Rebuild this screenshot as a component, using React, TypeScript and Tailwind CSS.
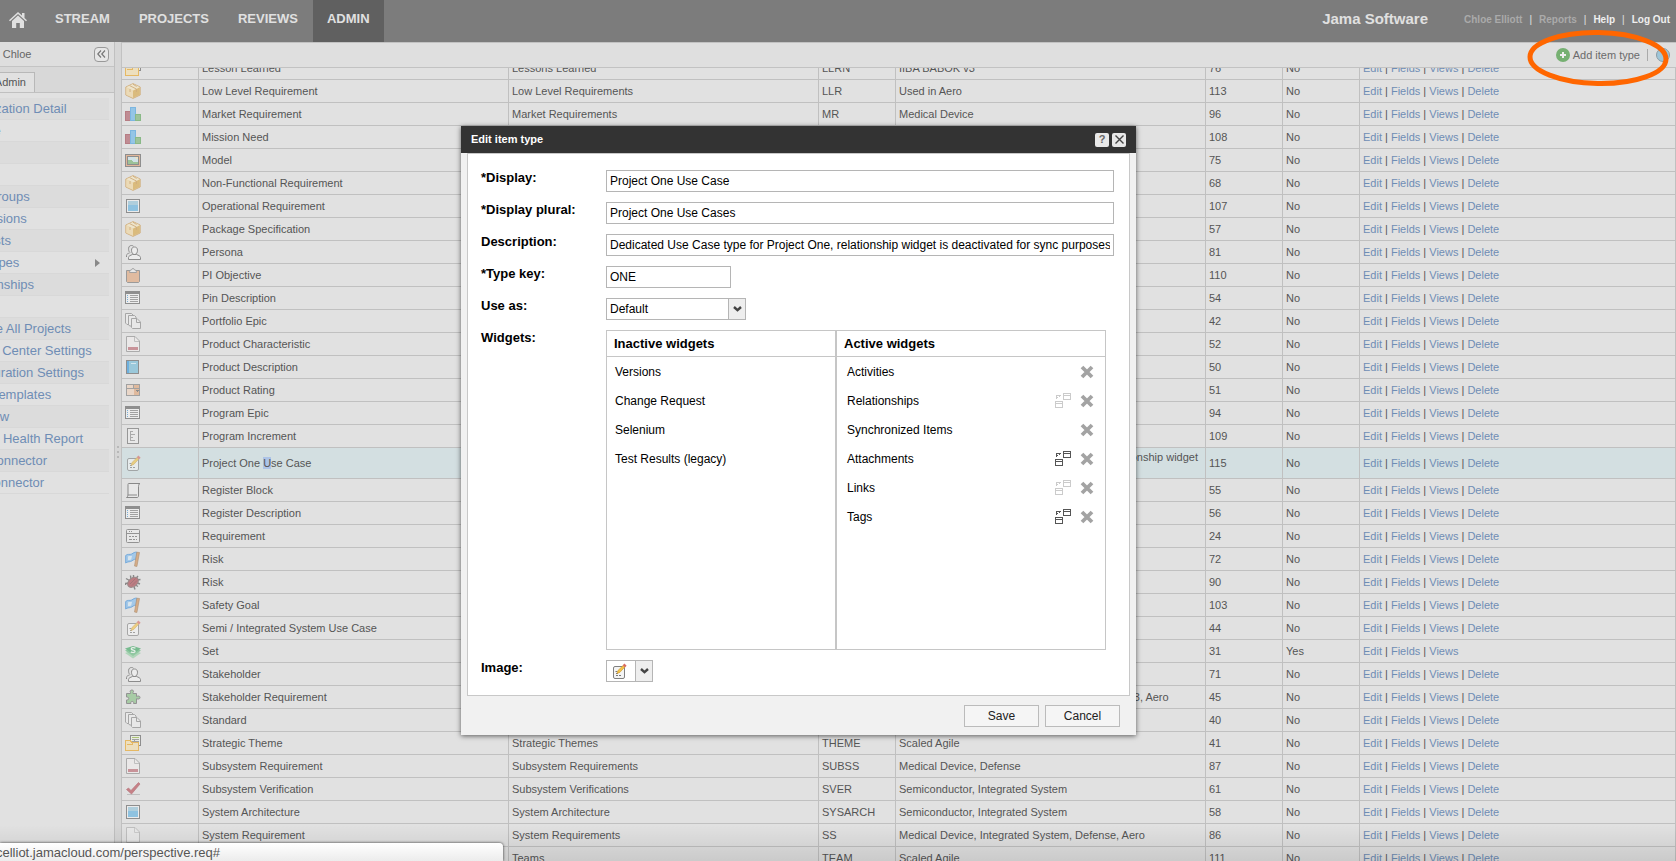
import clsx from "clsx";
import React from "react";

// Types
type IconName =
  | "folder"
  | "box"
  | "bars"
  | "picture"
  | "square"
  | "people"
  | "clipboard"
  | "list"
  | "copies"
  | "docRed"
  | "book"
  | "cabinet"
  | "ruler"
  | "edit"
  | "scroll"
  | "form"
  | "flag"
  | "bug"
  | "stack"
  | "puzzle"
  | "check"
  | "doc";

interface ItemType {
  icon: IconName;
  name: string;
  plural: string;
  typeKey: string;
  description: string;
  id: number;
  system?: boolean;
  selected?: boolean;
}

interface Widget {
  name: string;
  sync?: "on" | "off";
}

// Icons, all on a 16x16 grid
const iconShapes: Record<IconName, React.ReactNode> = {
  folder: (
    <g shapeRendering="crispEdges">
      <rect x="5.5" y="0.5" width="10" height="10" fill="#eef2e6" stroke="#585858" />
      <path d="M7 2.5h7" stroke="#8cb32e" />
      <path d="M7 4.5h7M7 6.5h7M10 8.5h4M9.5 4v6" stroke="#777" />
      <path d="M.5 15.5v-10h5l1 2h7v8z" fill="#f6dfa8" stroke="#e89d12" />
      <path d="M2 9.5h5l1-1" stroke="#e89d12" fill="none" />
    </g>
  ),
  box: (
    <>
      <path d="M8 .6l7.2 3.4v8L8 15.4.8 12V4z" fill="#e8c272" stroke="#c9964c" />
      <path d="M1.3 4.4L8 7.6v7.2l-6.7-3.1z" fill="#f2d79c" />
      <path d="M8 7.6l6.7-3.2v7.3L8 14.8z" fill="#d6a23c" />
      <path d="M1.3 4.2L8 1.1l6.7 3.1L8 7.5z" fill="#f6e6bd" />
      <path d="M4.6 2.6L11.4 6v3M8 1.2l3.6 2.3M5 6v3" stroke="#c48b3d" strokeWidth=".9" fill="none" />
    </>
  ),
  bars: (
    <g shapeRendering="crispEdges">
      <rect x="0.5" y="5.5" width="5" height="9" fill="#ab5560" stroke="#9a3c48" />
      <rect x="5.5" y="1.5" width="5" height="13" fill="#61b4ea" stroke="#3a9be0" />
      <rect x="10.5" y="8.5" width="5" height="6" fill="#72b06e" stroke="#4f9f4c" />
    </g>
  ),
  picture: (
    <g shapeRendering="crispEdges">
      <rect x="0.5" y="2.5" width="15" height="12" fill="#e09a6c" stroke="#585858" />
      <rect x="2.5" y="4.5" width="11" height="8" fill="#c8e4ec" stroke="#585858" />
      <path d="M3 8l3 0 3 2 4 0v2H3z" fill="#6fae6a" />
      <path d="M9 5h4v2h-2z" fill="#f2e5b2" />
    </g>
  ),
  square: (
    <g shapeRendering="crispEdges">
      <rect x="1.5" y="1.5" width="13" height="13" fill="#f2f2f2" stroke="#585858" />
      <rect x="3" y="3" width="10" height="5" fill="#8ec3da" />
      <rect x="3" y="7" width="10" height="6" fill="#58aee0" />
    </g>
  ),
  people: (
    <g fill="none" stroke="#555">
      <path d="M5 8.5C3.600 7.500 3.500 5.600 3.600 4.300 3.800 2.300 5 1.500 6.500 1.500c.8 0 1.500.2 2 .8M1.500 13V11.500c0-1.500 1.500-2 3-2.500" />
      <path
        d="M6.500 6.200C6.500 4 7.800 3 9.500 3s3 1 3 3.200-1 4.300-3 4.300-3-2-3-4.300zM3.500 15.500v-2c0-1.500 2-2.200 4-3h4c2 .8 4 1.500 4 3v2z"
        fill="#f4f4f4"
      />
    </g>
  ),
  clipboard: (
    <>
      <path d="M1.500 3.500h13v11l-1 1h-11l-1-1z" fill="#e0a276" stroke="#6b6b6b" />
      <path d="M4.500 5.500c0-2 1-2.500 2.200-2.800.1-1.600 2.500-1.600 2.600 0 1.200.3 2.200.8 2.200 2.800z" fill="#eee" stroke="#777" />
    </>
  ),
  list: (
    <g shapeRendering="crispEdges">
      <rect x="0.5" y="1.5" width="14" height="12" fill="#f4f4f4" stroke="#585858" />
      <rect x="0" y="1" width="15" height="3" fill="#585858" />
      <path d="M5 5.5h8M5 7.5h8M5 9.5h8M5 11.500h8" stroke="#777" />
      <path d="M2 5.5h1M2 7.5h1M2 9.5h1M2 11.500h1" stroke="#3a8fd0" />
    </g>
  ),
  copies: (
    <g fill="#eee" stroke="#808080">
      <path d="M.5.5h6l1.500 1.500v9.500h-6L.5 10z" />
      <path d="M3.500 2.500h6l1.500 1.500v9h-6l-1.500-1z" />
      <path d="M6.500 5.500h5.500l3.500 3.500v6.500h-8l-1-1z" />
      <path d="M11.500 5.500v4h4" fill="none" />
    </g>
  ),
  docRed: (
    <>
      <path d="M1.500.5h8.500l4.500 4.500v10.500h-13z" fill="#f0eeee" stroke="#888" />
      <path d="M9.500 1v4.500h4.500" fill="none" stroke="#aaa" />
      <rect x="3" y="11" width="10" height="3" fill="#b8606a" />
    </>
  ),
  book: (
    <g shapeRendering="crispEdges">
      <rect x="1.500" y="1.500" width="12" height="13" fill="#6bb8d6" stroke="#585858" />
      <rect x="2" y="2" width="2" height="12" fill="#2291dd" />
      <path d="M6 4.500h5" stroke="#cdeaf5" />
    </g>
  ),
  cabinet: (
    <g shapeRendering="crispEdges">
      <rect x="1.500" y="2.500" width="13" height="11" fill="#efd0b8" stroke="#777" />
      <rect x="9" y="3" width="5" height="10" fill="#dfa070" />
      <path d="M1 6.500h14M8.500 3v4" stroke="#777" />
      <path d="M10 8h4l-2 2z" fill="#555" />
    </g>
  ),
  ruler: (
    <g shapeRendering="crispEdges" fill="none" stroke="#666">
      <rect x="2.500" y="0.500" width="11" height="15" fill="#eee" />
      <path d="M5.500 3v10M5 3.500h3M5 6.500h5M5 9.500h3M5 12.500h5" stroke="#888" />
    </g>
  ),
  edit: (
    <>
      <rect x="2.500" y="3.500" width="11" height="12" rx="1.500" fill="#f4f4f4" stroke="#808080" />
      <path d="M5 10.500h2M5 12.500h6M4.500 8.500h2" stroke="#777" strokeDasharray="2 1" />
      <path d="M6 10.500l1-3L12.200 2.400l1.600 1.600L8.800 9.400z" fill="#f5c343" stroke="#c9962d" strokeWidth=".6" />
      <path d="M11.800 2.200L13.400.6l2.200 2.200L14 4.400z" fill="#d8685e" />
    </>
  ),
  scroll: (
    <path
      d="M3.500 1.500h11.500c-1 .5-1.500 1.500-1.500 3v9.500c0 .8-.5 1.500-1.500 1.500H1.500c1-.5 1.500-1.500 1.500-3V3c0-1 .2-1.500.5-1.500zM2.500 13h9.500"
      fill="#eee"
      stroke="#505050"
    />
  ),
  form: (
    <g fill="none" stroke="#606060">
      <rect x="1.500" y="1.500" width="13" height="13" rx="1" fill="#eee" />
      <path d="M2 5.500h12" />
      <path d="M4 3.500h1M6 3.500h1M4 8.500h2M7 8.500h2M10 8.500h2M4 11.500h3M8 11.500h2M11 11.500h1" />
    </g>
  ),
  flag: (
    <>
      <path d="M.7 4.500c2-2 4-.5 6-1.500S9.500.8 12 1.200l-1 7C8.500 8 7.500 10 5.500 10.500S2.500 10.500.7 12z" fill="#7ab9ee" stroke="#2f86d8" />
      <path d="M3 5.500c1.500-.8 2.500 0 4-.8L6.200 8.500c-1.300.5-2 .3-3.200.8z" fill="#d3e9f8" />
      <path d="M11.800 1.200l2.700.3L11.900 15.500l-2.400-.5z" fill="#cf8a4b" stroke="#8c5a2c" strokeWidth=".6" />
    </>
  ),
  bug: (
    <>
      <path
        d="M4.500 6.500L1 4.500M4.500 9L.5 9.500V11M6 5.500L5.500 1.500M8.500 4.500V1M11 4.500l2-2.500M12 6l3.500-.500M12.500 9l2.500 1M10.500 11l2.500 1.500M9 12.500l1 3M6.500 12.500l-1 1"
        stroke="#505050"
        strokeWidth="1.400"
      />
      <ellipse cx="8" cy="8.300" rx="6" ry="4.200" transform="rotate(-40 8 8.300)" fill="#a83a44" stroke="#6b5050" />
      <path d="M5 10l5.500-5.500M7 11.500L12 6.500" stroke="#7b3038" />
    </>
  ),
  stack: (
    <>
      <path d="M0 10l8-3 8 3-8 5.500z" fill="#8fce9f" />
      <path d="M0 7.500l8-3 8 3-8 5.500z" fill="#5cb878" />
      <path d="M0 5.500L8 3l8 2.500L8 11z" fill="#32a35a" />
      <path d="M10.500 5.200C9 4.200 6 4.500 6.300 6s3.800.8 3.800 2.300-2.800 1.500-4.300.6" fill="none" stroke="#e8f6ec" strokeWidth="1.300" />
    </>
  ),
  puzzle: (
    <path
      d="M1.500 4.500h4v-1c-1-1.500 0-2.500 1.500-2.500s2 1.500 1 2.500v1h3.500v3c2-1 3.500-.5 3.500 1s-1.500 2-3.500 1.200v4.800H8.500c.5-1.500 0-2-1.200-2s-2 .5-1.300 2H1.500v-3.500c2 0 2.200-.8 2.200-1.500s-.2-1.500-2.200-1.500z"
      fill="#82bd7e"
      stroke="#606060"
    />
  ),
  check: (
    <>
      <path d="M2 13.500h13" stroke="#aaa" />
      <path d="M1.500 8.500l2-1.500 2.500 2.500L13.500 1.500 15 3 6.500 13z" fill="#b5404b" stroke="#9c333e" strokeWidth=".7" />
    </>
  ),
  doc: (
    <>
      <path d="M1.500.5h8.500l4.500 4.500v10.500h-13z" fill="#eee" stroke="#aaa" />
      <path d="M9.500 1v4.500h4.500" fill="none" stroke="#bbb" />
    </>
  ),
};

const TypeIcon = ({ name, className }: { name: IconName; className?: string }) => (
  <svg viewBox="0 0 16 16" fill="none" className={clsx("block size-4 shrink-0", className)} aria-hidden="true">
    {iconShapes[name]}
  </svg>
);

const SyncIcon = ({ dimmed }: { dimmed: boolean }) => (
  <svg
    viewBox="0 0 16 15"
    className={clsx("block h-[15px] w-4", dimmed && "opacity-30")}
    shapeRendering="crispEdges"
    fill="none"
    stroke="#555"
  >
    <path d="M8.500.5h7v6h-7zM8 2.500h8M.5 8.500h7v6h-7zM0 10.500h8" />
    <path d="M1.500 6V2.500H6M4.500 1.500v2M.5 4.500h2" />
  </svg>
);

const RemoveIcon = () => (
  <svg viewBox="0 0 14 14" className="block size-3.5" fill="none" stroke="#a3a3a3" strokeWidth="3.800">
    <path d="M2 2l10 10M12 2L2 12" />
  </svg>
);

const ArrowIcon = () => (
  <svg viewBox="0 0 9 6" className="h-1.5 w-[9px]" fill="none" stroke="#444" strokeWidth="2.400">
    <path d="M1 1l3.500 3.200L8 1" />
  </svg>
);

// Data
const navItems = ["STREAM", "PROJECTS", "REVIEWS", "ADMIN"];

const sidebarItems = [
  "Organization Detail",
  "License",
  "",
  "",
  "User Groups",
  "Permissions",
  "Pick Lists",
  "Item Types",
  "Relationships",
  "",
  "Manage All Projects",
  "Review Center Settings",
  "Configuration Settings",
  "Email Templates",
  "Workflow",
  "System Health Report",
  "JIRA Connector",
  "TFS Connector",
];

const itemTypes: ItemType[] = [
  { icon: "folder", name: "Lesson Learned", plural: "Lessons Learned", typeKey: "LLRN", description: "IIBA BABOK v3", id: 76 },
  { icon: "box", name: "Low Level Requirement", plural: "Low Level Requirements", typeKey: "LLR", description: "Used in Aero", id: 113 },
  { icon: "bars", name: "Market Requirement", plural: "Market Requirements", typeKey: "MR", description: "Medical Device", id: 96 },
  { icon: "bars", name: "Mission Need", plural: "Mission Needs", typeKey: "MN", description: "Defense", id: 108 },
  { icon: "picture", name: "Model", plural: "Models", typeKey: "MOD", description: "", id: 75 },
  { icon: "box", name: "Non-Functional Requirement", plural: "Non-Functional Requirements", typeKey: "NFR", description: "", id: 68 },
  { icon: "square", name: "Operational Requirement", plural: "Operational Requirements", typeKey: "OR", description: "Defense", id: 107 },
  { icon: "box", name: "Package Specification", plural: "Package Specifications", typeKey: "PKG", description: "Semiconductor", id: 57 },
  { icon: "people", name: "Persona", plural: "Personas", typeKey: "PER", description: "", id: 81 },
  { icon: "clipboard", name: "PI Objective", plural: "PI Objectives", typeKey: "PIO", description: "Scaled Agile", id: 110 },
  { icon: "list", name: "Pin Description", plural: "Pin Descriptions", typeKey: "PIN", description: "Semiconductor", id: 54 },
  { icon: "copies", name: "Portfolio Epic", plural: "Portfolio Epics", typeKey: "PEPIC", description: "Scaled Agile", id: 42 },
  { icon: "docRed", name: "Product Characteristic", plural: "Product Characteristics", typeKey: "PCHAR", description: "Semiconductor", id: 52 },
  { icon: "book", name: "Product Description", plural: "Product Descriptions", typeKey: "PDESC", description: "Semiconductor", id: 50 },
  { icon: "cabinet", name: "Product Rating", plural: "Product Ratings", typeKey: "PRAT", description: "Semiconductor", id: 51 },
  { icon: "list", name: "Program Epic", plural: "Program Epics", typeKey: "PRGE", description: "Scaled Agile", id: 94 },
  { icon: "ruler", name: "Program Increment", plural: "Program Increments", typeKey: "PI", description: "Scaled Agile", id: 109 },
  {
    icon: "edit",
    name: "Project One Use Case",
    plural: "Project One Use Cases",
    typeKey: "ONE",
    description: "Dedicated Use Case type for Project One, relationship widget is deactivated for sync purposes",
    id: 115,
    selected: true,
  },
  { icon: "scroll", name: "Register Block", plural: "Register Blocks", typeKey: "RB", description: "Semiconductor", id: 55 },
  { icon: "list", name: "Register Description", plural: "Register Descriptions", typeKey: "RD", description: "Semiconductor", id: 56 },
  { icon: "form", name: "Requirement", plural: "Requirements", typeKey: "REQ", description: "", id: 24 },
  { icon: "flag", name: "Risk", plural: "Risks", typeKey: "RISK", description: "", id: 72 },
  { icon: "bug", name: "Risk", plural: "Risks", typeKey: "RSK", description: "", id: 90 },
  { icon: "flag", name: "Safety Goal", plural: "Safety Goals", typeKey: "SG", description: "", id: 103 },
  { icon: "edit", name: "Semi / Integrated System Use Case", plural: "Semi / Integrated System Use Cases", typeKey: "SUC", description: "", id: 44 },
  { icon: "stack", name: "Set", plural: "Sets", typeKey: "SET", description: "", id: 31, system: true },
  { icon: "people", name: "Stakeholder", plural: "Stakeholders", typeKey: "STK", description: "", id: 71 },
  {
    icon: "puzzle",
    name: "Stakeholder Requirement",
    plural: "Stakeholder Requirements",
    typeKey: "SHR",
    description: "Semiconductor, Medical Devices, IIBA BABOK v3, Aero",
    id: 45,
  },
  { icon: "copies", name: "Standard", plural: "Standards", typeKey: "STD", description: "", id: 40 },
  { icon: "folder", name: "Strategic Theme", plural: "Strategic Themes", typeKey: "THEME", description: "Scaled Agile", id: 41 },
  { icon: "docRed", name: "Subsystem Requirement", plural: "Subsystem Requirements", typeKey: "SUBSS", description: "Medical Device, Defense", id: 87 },
  { icon: "check", name: "Subsystem Verification", plural: "Subsystem Verifications", typeKey: "SVER", description: "Semiconductor, Integrated System", id: 61 },
  { icon: "square", name: "System Architecture", plural: "System Architecture", typeKey: "SYSARCH", description: "Semiconductor, Integrated System", id: 58 },
  {
    icon: "doc",
    name: "System Requirement",
    plural: "System Requirements",
    typeKey: "SS",
    description: "Medical Device, Integrated System, Defense, Aero",
    id: 86,
  },
  { icon: "people", name: "Team", plural: "Teams", typeKey: "TEAM", description: "Scaled Agile", id: 111 },
];

const inactiveWidgets: Widget[] = [
  { name: "Versions" },
  { name: "Change Request" },
  { name: "Selenium" },
  { name: "Test Results (legacy)" },
];

const activeWidgets: Widget[] = [
  { name: "Activities" },
  { name: "Relationships", sync: "off" },
  { name: "Synchronized Items" },
  { name: "Attachments", sync: "on" },
  { name: "Links", sync: "off" },
  { name: "Tags", sync: "on" },
];

// Components
const Header = () => (
  <header className="flex h-[42px] shrink-0 bg-[#7c7c7c] font-bold text-[#e0e0e0]">
    <a href="#" aria-label="Home" className="flex w-[41px] items-center pb-0.5 pl-[9px]">
      <svg viewBox="0 0 18 16" className="h-4 w-[18px]" fill="#e0e0e0">
        <path d="M9 0l4 3.600V1h2.500v4.900L18 8.200l-1 1.100-8-7.200-8 7.200-1-1.100z" />
        <path d="M9 3.600l6 5.400v7h-4.200v-5H7.200v5H3V9z" />
      </svg>
    </a>
    <nav className="flex gap-px text-[13px]">
      {navItems.map((item) => (
        <a key={item} href="#" className={clsx("flex items-center px-3.5 pb-1", item === "ADMIN" && "bg-[#606060]")}>
          {item}
        </a>
      ))}
    </nav>
    <div className="ml-auto flex items-center gap-9 pr-1.5 pb-1">
      <span className="text-[15px]">Jama Software</span>
      <div className="flex items-center gap-[7px] text-[10px]">
        <span className="text-[#aaa]">Chloe Elliott</span>
        <span className="font-normal">|</span>
        <a href="#" className="text-[#aaa]">Reports</a>
        <span className="font-normal">|</span>
        <a href="#" className="text-[#efefef]">Help</a>
        <span className="font-normal">|</span>
        <a href="#" className="text-[#efefef]">Log Out</a>
      </div>
    </div>
  </header>
);

// The page is scrolled sideways a little, so the sidebar's left edge is cut off
const Sidebar = () => (
  <aside className="w-[115px] shrink-0 overflow-hidden border-r border-[#c0c0c0] bg-[#e1e1e1]">
    <div className="-ml-12">
      <div className="flex h-[25px] items-center justify-between border-b border-[#c4c4c4] bg-[#dedede] pr-[5px] pl-0.5 text-[11px] text-[#666]">
        <span>Welcome Chloe</span>
        <button aria-label="Collapse" className="flex size-[15px] items-center justify-center rounded-sm border border-[#999] bg-[#e6e6e6]">
          <svg viewBox="0 0 9 8" className="h-2 w-[9px]" fill="none" stroke="#777" strokeWidth="1.200">
            <path d="M4 .5L.8 4 4 7.500M8 .5L4.800 4 8 7.500" />
          </svg>
        </button>
      </div>
      <div className="flex h-[26px] items-end border-b border-[#c0c0c0] bg-[#d8d8d8]">
        <span className="flex h-5 w-[83px] items-center justify-end border-t border-r border-[#b8b8b8] bg-[#e1e1e1] pr-2 text-[11px] text-[#555]">
          Admin
        </span>
      </div>
      <ul className="mr-[5px] pt-[5px]">
        {sidebarItems.map((item, index) => (
          <li
            key={index}
            className="flex h-[22px] items-center justify-between border-b border-[#d8d8d8] pr-[9px] pl-1 odd:bg-[#dcdcdc]"
          >
            <a href="#" className="text-[13px] whitespace-nowrap text-[#6f8db5]">{item}</a>
            {item === "Item Types" && (
              <svg viewBox="0 0 5 8" className="h-2 w-[5px]" fill="#888">
                <path d="M0 0l5 4-5 4z" />
              </svg>
            )}
          </li>
        ))}
      </ul>
    </div>
  </aside>
);

const Splitter = () => (
  <div className="flex w-1.5 shrink-0 flex-col items-center justify-center gap-[3px] bg-[#d6d6d6]">
    <span className="size-0.5 bg-[#b8b8b8]" />
    <span className="size-0.5 bg-[#b8b8b8]" />
    <span className="size-0.5 bg-[#b8b8b8]" />
  </div>
);

const Toolbar = () => (
  <div className="flex h-[26px] shrink-0 items-center justify-end border-y border-l border-[#c2c2c2] bg-[#dfdfdf] pr-1.5 text-[11px] text-[#6b6b6b]">
    <button className="flex items-center gap-[3px]">
      <svg viewBox="0 0 14 14" className="size-3.5">
        <circle cx="7" cy="7" r="7" fill="#76b072" />
        <path d="M7 4v6M4 7h6" stroke="#eee" strokeWidth="2" />
      </svg>
      Add item type
    </button>
    <span className="mr-2 ml-[7px] h-3 w-px bg-[#aaa]" />
    <button aria-label="Help" className="size-3.5 rounded-full border border-[#8a9ba5] bg-[#9fc6d8]" />
  </div>
);

const Name = ({ item }: { item: ItemType }) => {
  if (!item.selected) return <>{item.name}</>;
  return (
    <>
      Project One <span className="bg-[#adc3e6]">U</span>se Case
    </>
  );
};

const ItemTable = () => (
  <table className="-mt-[11px] w-full table-fixed border-separate border-spacing-0 border-l border-[#c0c0c0] text-left text-[11px] leading-3 text-[#555]">
    <colgroup>
      <col className="w-[77px]" />
      <col className="w-[310px]" />
      <col className="w-[310px]" />
      <col className="w-[77px]" />
      <col className="w-[310px]" />
      <col className="w-[77px]" />
      <col className="w-[77px]" />
      <col />
    </colgroup>
    <tbody className="[&_td]:border-r [&_td]:border-b [&_td]:border-[#c0c0c0] [&_td]:px-[3px] [&_td]:py-[3px]">
      {itemTypes.map((item) => (
        <tr key={item.id} className={clsx("h-[23px]", item.selected && "bg-[#d3dfe1]")}>
          <td>
            <TypeIcon name={item.icon} className="opacity-60" />
          </td>
          <td><Name item={item} /></td>
          <td>{item.plural}</td>
          <td>{item.typeKey}</td>
          <td>{item.description}</td>
          <td>{item.id}</td>
          <td>{item.system ? "Yes" : "No"}</td>
          <td>
            <a href="#" className="text-[#6f8db5]">Edit</a> | <a href="#" className="text-[#6f8db5]">Fields</a> |{" "}
            <a href="#" className="text-[#6f8db5]">Views</a>
            {!item.system && (
              <>
                {" "}| <a href="#" className="text-[#6f8db5]">Delete</a>
              </>
            )}
          </td>
        </tr>
      ))}
    </tbody>
  </table>
);

const Field = ({ label, id, children }: { label: string; id: string; children: React.ReactNode }) => (
  <div className="flex items-start">
    <label htmlFor={id} className="w-[125px] shrink-0 text-[13px] leading-4 font-bold">{label}</label>
    {children}
  </div>
);

const TextInput = ({ id, value, className }: { id: string; value: string; className: string }) => (
  <input
    id={id}
    type="text"
    defaultValue={value}
    className={clsx("h-[22px] border border-[#b5b5b5] bg-white px-[3px] text-xs outline-none", className)}
  />
);

const WidgetList = ({ title, widgets, active, className }: { title: string; widgets: Widget[]; active?: boolean; className: string }) => (
  <div className={clsx("h-80 border border-[#c6c6c6]", className)}>
    <h2 className="flex h-[26px] items-center border-b border-[#c6c6c6] px-[7px] text-[13px] font-bold">{title}</h2>
    <ul className="pr-[11px] pl-2 text-xs">
      {widgets.map((widget) => (
        <li key={widget.name} className={clsx("flex h-[29px] items-center gap-[9px]", active && "pl-0.5")}>
          <span className="flex-1">{widget.name}</span>
          {widget.sync && (
            <button aria-label="Sync settings">
              <SyncIcon dimmed={widget.sync === "off"} />
            </button>
          )}
          {active && (
            <button aria-label={`Remove ${widget.name}`}>
              <RemoveIcon />
            </button>
          )}
        </li>
      ))}
    </ul>
  </div>
);

const EditDialog = () => (
  <div
    role="dialog"
    aria-label="Edit item type"
    className="absolute top-[126px] left-[461px] w-[675px] bg-[#f1f1f1] text-black shadow-[0_1px_5px_rgba(0,0,0,0.6)]"
  >
    <div className="flex h-[27px] items-center gap-[3px] bg-[#333] px-2.5">
      <h1 className="flex-1 text-[11px] font-bold text-white">Edit item type</h1>
      <button className="flex size-3.5 items-center justify-center rounded-xs bg-[#e8e8e8] text-[11px] font-bold text-[#666]">?</button>
      <button aria-label="Close" className="flex size-3.5 items-center justify-center rounded-xs bg-[#e8e8e8]">
        <svg viewBox="0 0 9 9" className="size-[9px]" stroke="#444" strokeWidth="1.400">
          <path d="M.5.5l8 8M8.500.5l-8 8" />
        </svg>
      </button>
    </div>
    <form className="mx-1.5 flex flex-col gap-2.5 border border-[#c8c8c8] bg-white px-[13px] pt-4 pb-[13px]">
      <Field label="*Display:" id="display">
        <TextInput id="display" value="Project One Use Case" className="w-[508px]" />
      </Field>
      <Field label="*Display plural:" id="plural">
        <TextInput id="plural" value="Project One Use Cases" className="w-[508px]" />
      </Field>
      <Field label="Description:" id="description">
        <TextInput
          id="description"
          value="Dedicated Use Case type for Project One, relationship widget is deactivated for sync purposes"
          className="w-[508px]"
        />
      </Field>
      <Field label="*Type key:" id="key">
        <TextInput id="key" value="ONE" className="w-[125px]" />
      </Field>
      <Field label="Use as:" id="use-as">
        <select id="use-as" className="h-[22px] w-[123px] appearance-none border border-[#b5b5b5] bg-white px-[3px] text-xs">
          <option>Default</option>
        </select>
        <span className="flex h-[22px] w-[17px] items-center justify-center border border-l-0 border-[#b5b5b5] bg-[#eee]">
          <ArrowIcon />
        </span>
      </Field>
      <div className="flex items-start">
        <span className="w-[125px] shrink-0 text-[13px] leading-4 font-bold">Widgets:</span>
        <WidgetList title="Inactive widgets" widgets={inactiveWidgets} className="w-[230px]" />
        <WidgetList title="Active widgets" widgets={activeWidgets} active className="w-[270px]" />
      </div>
      <Field label="Image:" id="image">
        <button id="image" type="button" className="flex h-[22px] border border-[#b5b5b5]">
          <span className="flex h-full w-7 items-center pl-1">
            <TypeIcon name="edit" />
          </span>
          <span className="flex h-full w-[17px] items-center justify-center border-l border-[#b5b5b5] bg-[#eee]">
            <ArrowIcon />
          </span>
        </button>
      </Field>
    </form>
    <div className="flex justify-end gap-1.5 pt-[9px] pr-4 pb-2 text-xs text-[#222]">
      <button className="h-[22px] w-[75px] border border-[#bbb] bg-[#f5f5f5]">Save</button>
      <button className="h-[22px] w-[75px] border border-[#bbb] bg-[#f5f5f5]">Cancel</button>
    </div>
  </div>
);

// Link target preview, cut off on the left like the rest of the page
const StatusBar = () => (
  <div className="absolute bottom-0 left-0 h-[18px] w-[503px] overflow-hidden rounded-tr-sm bg-linear-to-b from-white to-[#ececec] shadow-[0_0_3px_rgba(0,0,0,0.8)]">
    <p className="-ml-1 text-[13px] leading-5 text-[#555]">celliot.jamacloud.com/perspective.req#</p>
  </div>
);

// Main Component
export default function App() {
  return (
    <div className="relative flex h-screen flex-col overflow-hidden bg-[#e1e1e1] font-['Liberation_Sans',Arial,sans-serif]">
      <Header />
      <div className="flex min-h-0 flex-1">
        <Sidebar />
        <Splitter />
        <main className="flex min-w-0 flex-1 flex-col">
          <Toolbar />
          <div className="min-h-0 flex-1 overflow-hidden">
            <ItemTable />
          </div>
        </main>
      </div>

      <div className="pointer-events-none absolute inset-x-0 bottom-0 h-9 bg-linear-to-t from-black/10 to-transparent" />
      <EditDialog />

      {/* Hand-drawn callout round the add button */}
      <svg viewBox="0 0 146 62" className="pointer-events-none absolute top-7 right-[5px] h-[62px] w-[146px]" fill="none">
        <ellipse cx="73" cy="30" rx="68" ry="25.500" stroke="#ff6600" strokeWidth="5" transform="rotate(1 73 30)" />
      </svg>

      <StatusBar />
    </div>
  );
}
